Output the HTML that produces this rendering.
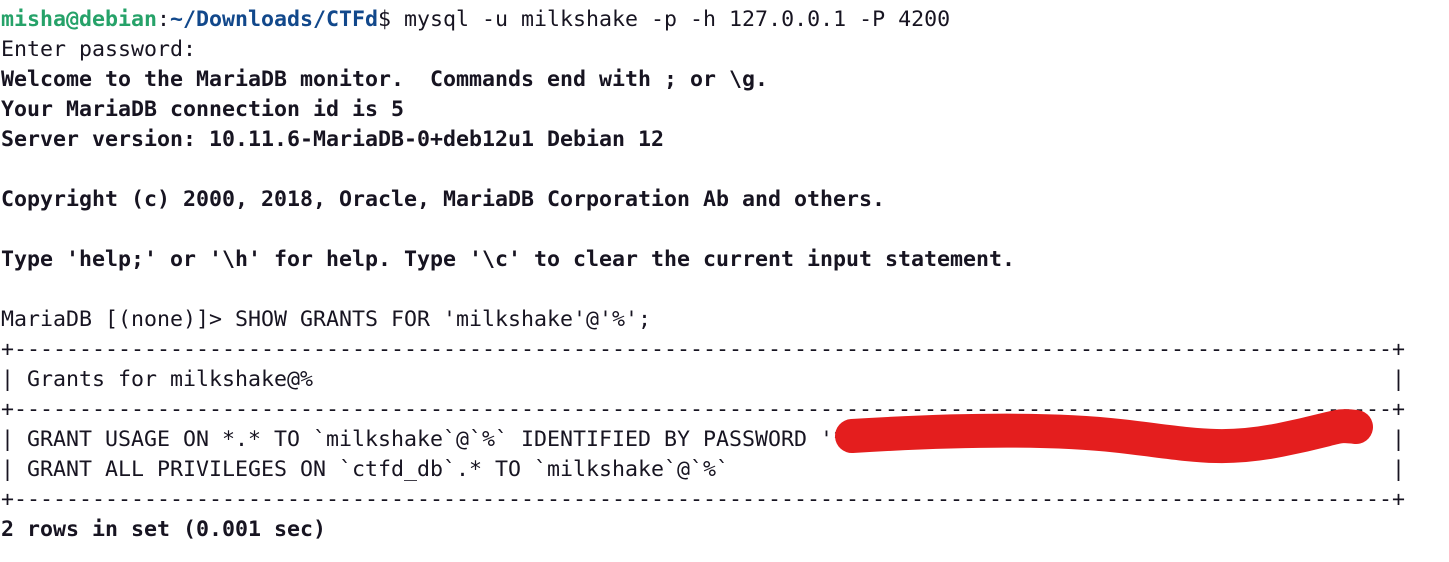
<!DOCTYPE html>
<html><head><meta charset="utf-8"><style>
html,body{margin:0;padding:0;background:#fff;width:1449px;height:562px;overflow:hidden;position:relative}
pre{margin:0;position:absolute;left:1px;top:5px;font-family:"DejaVu Sans Mono","Liberation Mono",monospace;font-size:21.6px;line-height:30px;color:#171421}
b{font-weight:bold}
.g{color:#26a269;font-weight:bold}.bl{color:#12488b;font-weight:bold}
svg{position:absolute;left:0;top:0}
</style></head><body>
<pre><span class="g">misha@debian</span>:<span class="bl">~/Downloads/CTFd</span>$ mysql -u milkshake -p -h 127.0.0.1 -P 4200
Enter password:
<b>Welcome to the MariaDB monitor.  Commands end with ; or \g.</b>
<b>Your MariaDB connection id is 5</b>
<b>Server version: 10.11.6-MariaDB-0+deb12u1 Debian 12</b>

<b>Copyright (c) 2000, 2018, Oracle, MariaDB Corporation Ab and others.</b>

<b>Type 'help;' or '\h' for help. Type '\c' to clear the current input statement.</b>

MariaDB [(none)]&gt; SHOW GRANTS FOR 'milkshake'@'%';
+----------------------------------------------------------------------------------------------------------+
| Grants for milkshake@%                                                                                   |
+----------------------------------------------------------------------------------------------------------+
| GRANT USAGE ON *.* TO `milkshake`@`%` IDENTIFIED BY PASSWORD '*                                          |
| GRANT ALL PRIVILEGES ON `ctfd_db`.* TO `milkshake`@`%`                                                   |
+----------------------------------------------------------------------------------------------------------+
<b>2 rows in set (0.001 sec)</b>
</pre>
<svg width="1449" height="562"><path d="M852 436 C 950 430, 1050 428, 1120 436 S 1220 452, 1280 440 S 1335 424, 1356 427" fill="none" stroke="#e41e1e" stroke-width="34" stroke-linecap="round"/></svg>
</body></html>
